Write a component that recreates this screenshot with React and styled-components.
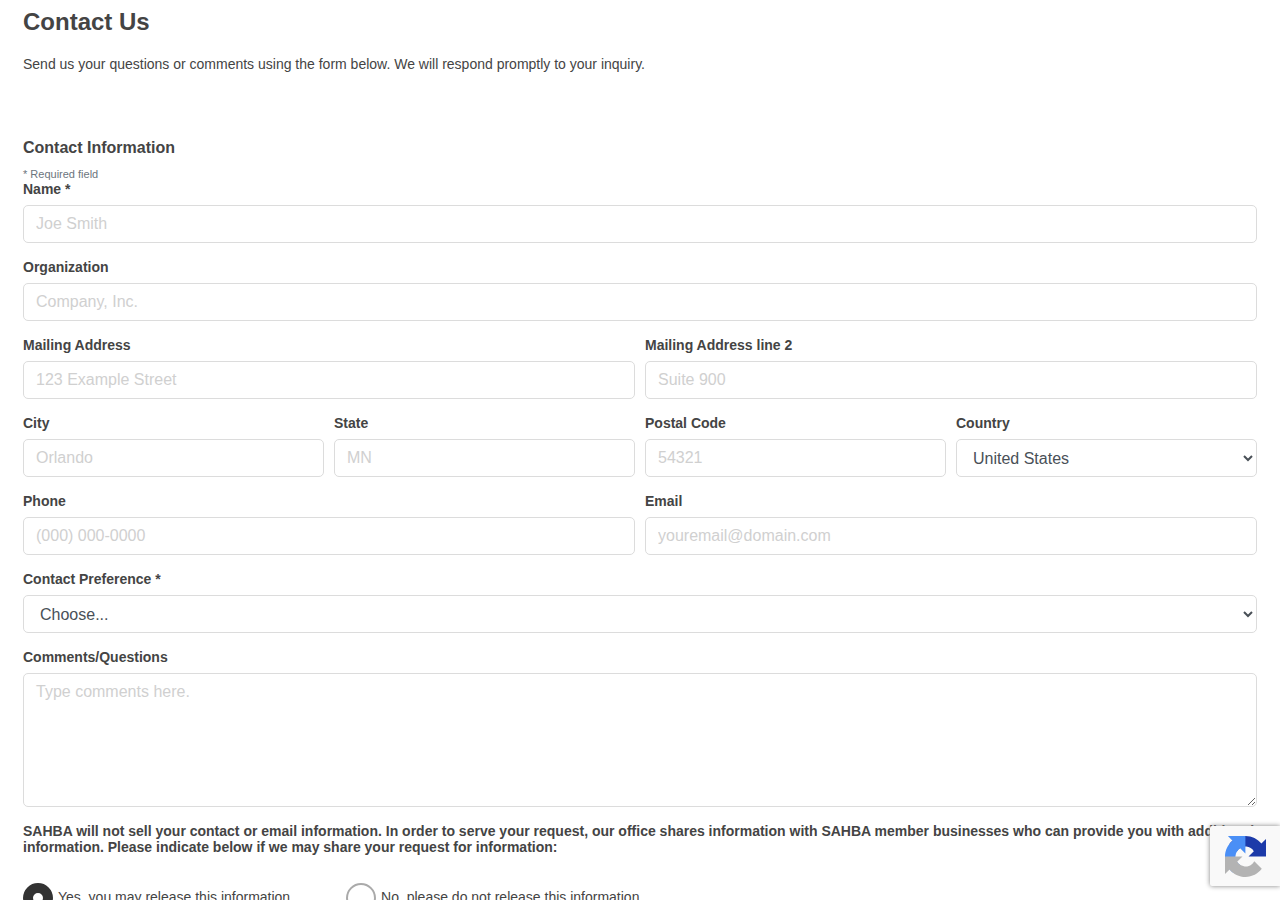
import React from "react";
import styled, { createGlobalStyle, css } from "styled-components";

const GlobalStyle = createGlobalStyle`
  *, *::before, *::after { box-sizing: border-box; }
  body {
    margin: 0;
    background: #fff;
    color: #444;
    font-family: "Liberation Sans", Arial, sans-serif;
    font-size: 14px;
    line-height: 16px;
  }
`;

const Page = styled.main`
  padding: 8px 23px 32px;
`;

const Title = styled.h1`
  margin: 0 0 20px;
  font-size: 24px;
  line-height: 28px;
`;

const Intro = styled.p`
  margin: 0 0 64px;
`;

const SectionTitle = styled.h2`
  margin: 0 0 8px;
  font-size: 16px;
  line-height: 24px;
`;

const RequiredNote = styled.small`
  display: block;
  margin-bottom: 1px;
  color: #6c757d;
  font-size: 11px;
  line-height: 12px;
`;

const Row = styled.div`
  display: grid;
  grid-template-columns: repeat(${(p) => p.$columns || 1}, minmax(0, 1fr));
  column-gap: 10px;
  margin-bottom: 16px;
`;

const FieldGroup = styled.div`
  display: flex;
  flex-direction: column;
  gap: 8px;
`;

const Label = styled.label`
  font-weight: 700;
`;

const control = css`
  display: block;
  width: 100%;
  height: 38px;
  padding: 6px 12px;
  border: 1px solid #dcdcdc;
  border-radius: 5px;
  background: #fff;
  color: #495057;
  font-family: inherit;
  font-size: 16px;
  line-height: 24px;

  &::placeholder {
    color: #d0d0d0;
    opacity: 1;
  }
`;

const TextInput = styled.input`
  ${control}
`;

const Select = styled.select`
  ${control}
`;

const TextArea = styled.textarea`
  ${control}
  height: 134px;
  resize: vertical;
`;

const ReleaseGroup = styled.fieldset`
  min-width: 0;
  margin: 0;
  padding: 0;
  border: 0;
`;

const ReleaseNotice = styled.legend`
  padding: 0;
  margin-bottom: 28px;
  font-weight: 700;
`;

const RadioRow = styled.div`
  display: flex;
  flex-wrap: wrap;
  gap: 16px 52px;
`;

const RadioLabel = styled.label`
  display: flex;
  align-items: flex-start;
  gap: 5px;
  line-height: 28px;
`;

const Radio = styled.input`
  appearance: none;
  width: 30px;
  height: 30px;
  margin: 0;
  border: 2px solid #aaa;
  border-radius: 50%;
  background: #fff;

  &:checked {
    border: 10px solid #333;
  }
`;

const Badge = styled.aside`
  position: fixed;
  right: 0;
  bottom: 14px;
  display: flex;
  align-items: center;
  width: 70px;
  height: 60px;
  padding-left: 15px;
  border-radius: 2px 0 0 2px;
  background: #f9f9f9;
  box-shadow: gray 0 0 5px;
`;

const Field = ({ id, label, children }) => (
  <FieldGroup>
    <Label htmlFor={id}>{label}</Label>
    {children}
  </FieldGroup>
);

const TextField = ({ id, label, placeholder, type = "text", required }) => (
  <Field id={id} label={label}>
    <TextInput id={id} name={id} type={type} placeholder={placeholder} required={required} />
  </Field>
);

const RecaptchaLogo = () => (
  <svg width="41" height="41" viewBox="0 0 64 64" role="img" aria-label="reCAPTCHA">
    <path fill="#1c3aa9" d="M64 31.955l-.033-1.37V4.687l-7.16 7.16C50.948 4.674 42.033.093 32.05.093c-10.4 0-19.622 4.96-25.458 12.64l11.736 11.86a15.55 15.55 0 0 1 4.754-5.334c2.05-1.6 4.952-2.906 8.968-2.906.485 0 .86.057 1.135.163 4.976.393 9.288 3.14 11.828 7.124l-8.307 8.307L64 31.953" />
    <path fill="#4a8ff6" d="M31.862.094l-1.37.033H4.594l7.16 7.16C4.58 13.147 0 22.06 0 32.046c0 10.4 4.96 19.622 12.64 25.458L24.5 45.768a15.55 15.55 0 0 1-5.334-4.754c-1.6-2.05-2.906-4.952-2.906-8.968 0-.485.057-.86.163-1.135.393-4.976 3.14-9.288 7.124-11.828l8.307 8.307L31.86.095" />
    <path fill="#b3b3b3" d="M.001 32.045l.033 1.37v25.898l7.16-7.16c5.86 7.173 14.774 11.754 24.76 11.754 10.4 0 19.622-4.96 25.458-12.64l-11.736-11.86a15.55 15.55 0 0 1-4.754 5.334c-2.05 1.6-4.952 2.906-8.968 2.906-.485 0-.86-.057-1.135-.163-4.976-.393-9.288-3.14-11.828-7.124l8.307-8.307c-10.522.04-22.4.066-27.295-.005" />
  </svg>
);

export default function App() {
  return (
    <>
      <GlobalStyle />
      <Page>
        <Title>Contact Us</Title>
        <Intro>
          Send us your questions or comments using the form below. We will respond promptly to your inquiry.
        </Intro>
        <form>
          <SectionTitle>Contact Information</SectionTitle>
          <RequiredNote>* Required field</RequiredNote>
          <Row>
            <TextField id="name" label="Name *" placeholder="Joe Smith" required />
          </Row>
          <Row>
            <TextField id="organization" label="Organization" placeholder="Company, Inc." />
          </Row>
          <Row $columns={2}>
            <TextField id="address1" label="Mailing Address" placeholder="123 Example Street" />
            <TextField id="address2" label="Mailing Address line 2" placeholder="Suite 900" />
          </Row>
          <Row $columns={4}>
            <TextField id="city" label="City" placeholder="Orlando" />
            <TextField id="state" label="State" placeholder="MN" />
            <TextField id="postal" label="Postal Code" placeholder="54321" />
            <Field id="country" label="Country">
              <Select id="country" name="country" defaultValue="US">
                <option value="US">United States</option>
              </Select>
            </Field>
          </Row>
          <Row $columns={2}>
            <TextField id="phone" label="Phone" type="tel" placeholder="(000) 000-0000" />
            <TextField id="email" label="Email" type="email" placeholder="youremail@domain.com" />
          </Row>
          <Row>
            <Field id="preference" label="Contact Preference *">
              <Select id="preference" name="preference" defaultValue="" required>
                <option value="">Choose...</option>
              </Select>
            </Field>
          </Row>
          <Row>
            <Field id="comments" label="Comments/Questions">
              <TextArea id="comments" name="comments" placeholder="Type comments here." />
            </Field>
          </Row>
          <ReleaseGroup>
            <ReleaseNotice>
              SAHBA will not sell your contact or email information. In order to serve your request, our office
              shares information with SAHBA member businesses who can provide you with additional information.
              Please indicate below if we may share your request for information:
            </ReleaseNotice>
            <RadioRow>
              <RadioLabel htmlFor="release-yes">
                <Radio id="release-yes" type="radio" name="release" value="yes" defaultChecked />
                Yes, you may release this information.
              </RadioLabel>
              <RadioLabel htmlFor="release-no">
                <Radio id="release-no" type="radio" name="release" value="no" />
                No, please do not release this information.
              </RadioLabel>
            </RadioRow>
          </ReleaseGroup>
        </form>
      </Page>
      <Badge>
        <RecaptchaLogo />
      </Badge>
    </>
  );
}
